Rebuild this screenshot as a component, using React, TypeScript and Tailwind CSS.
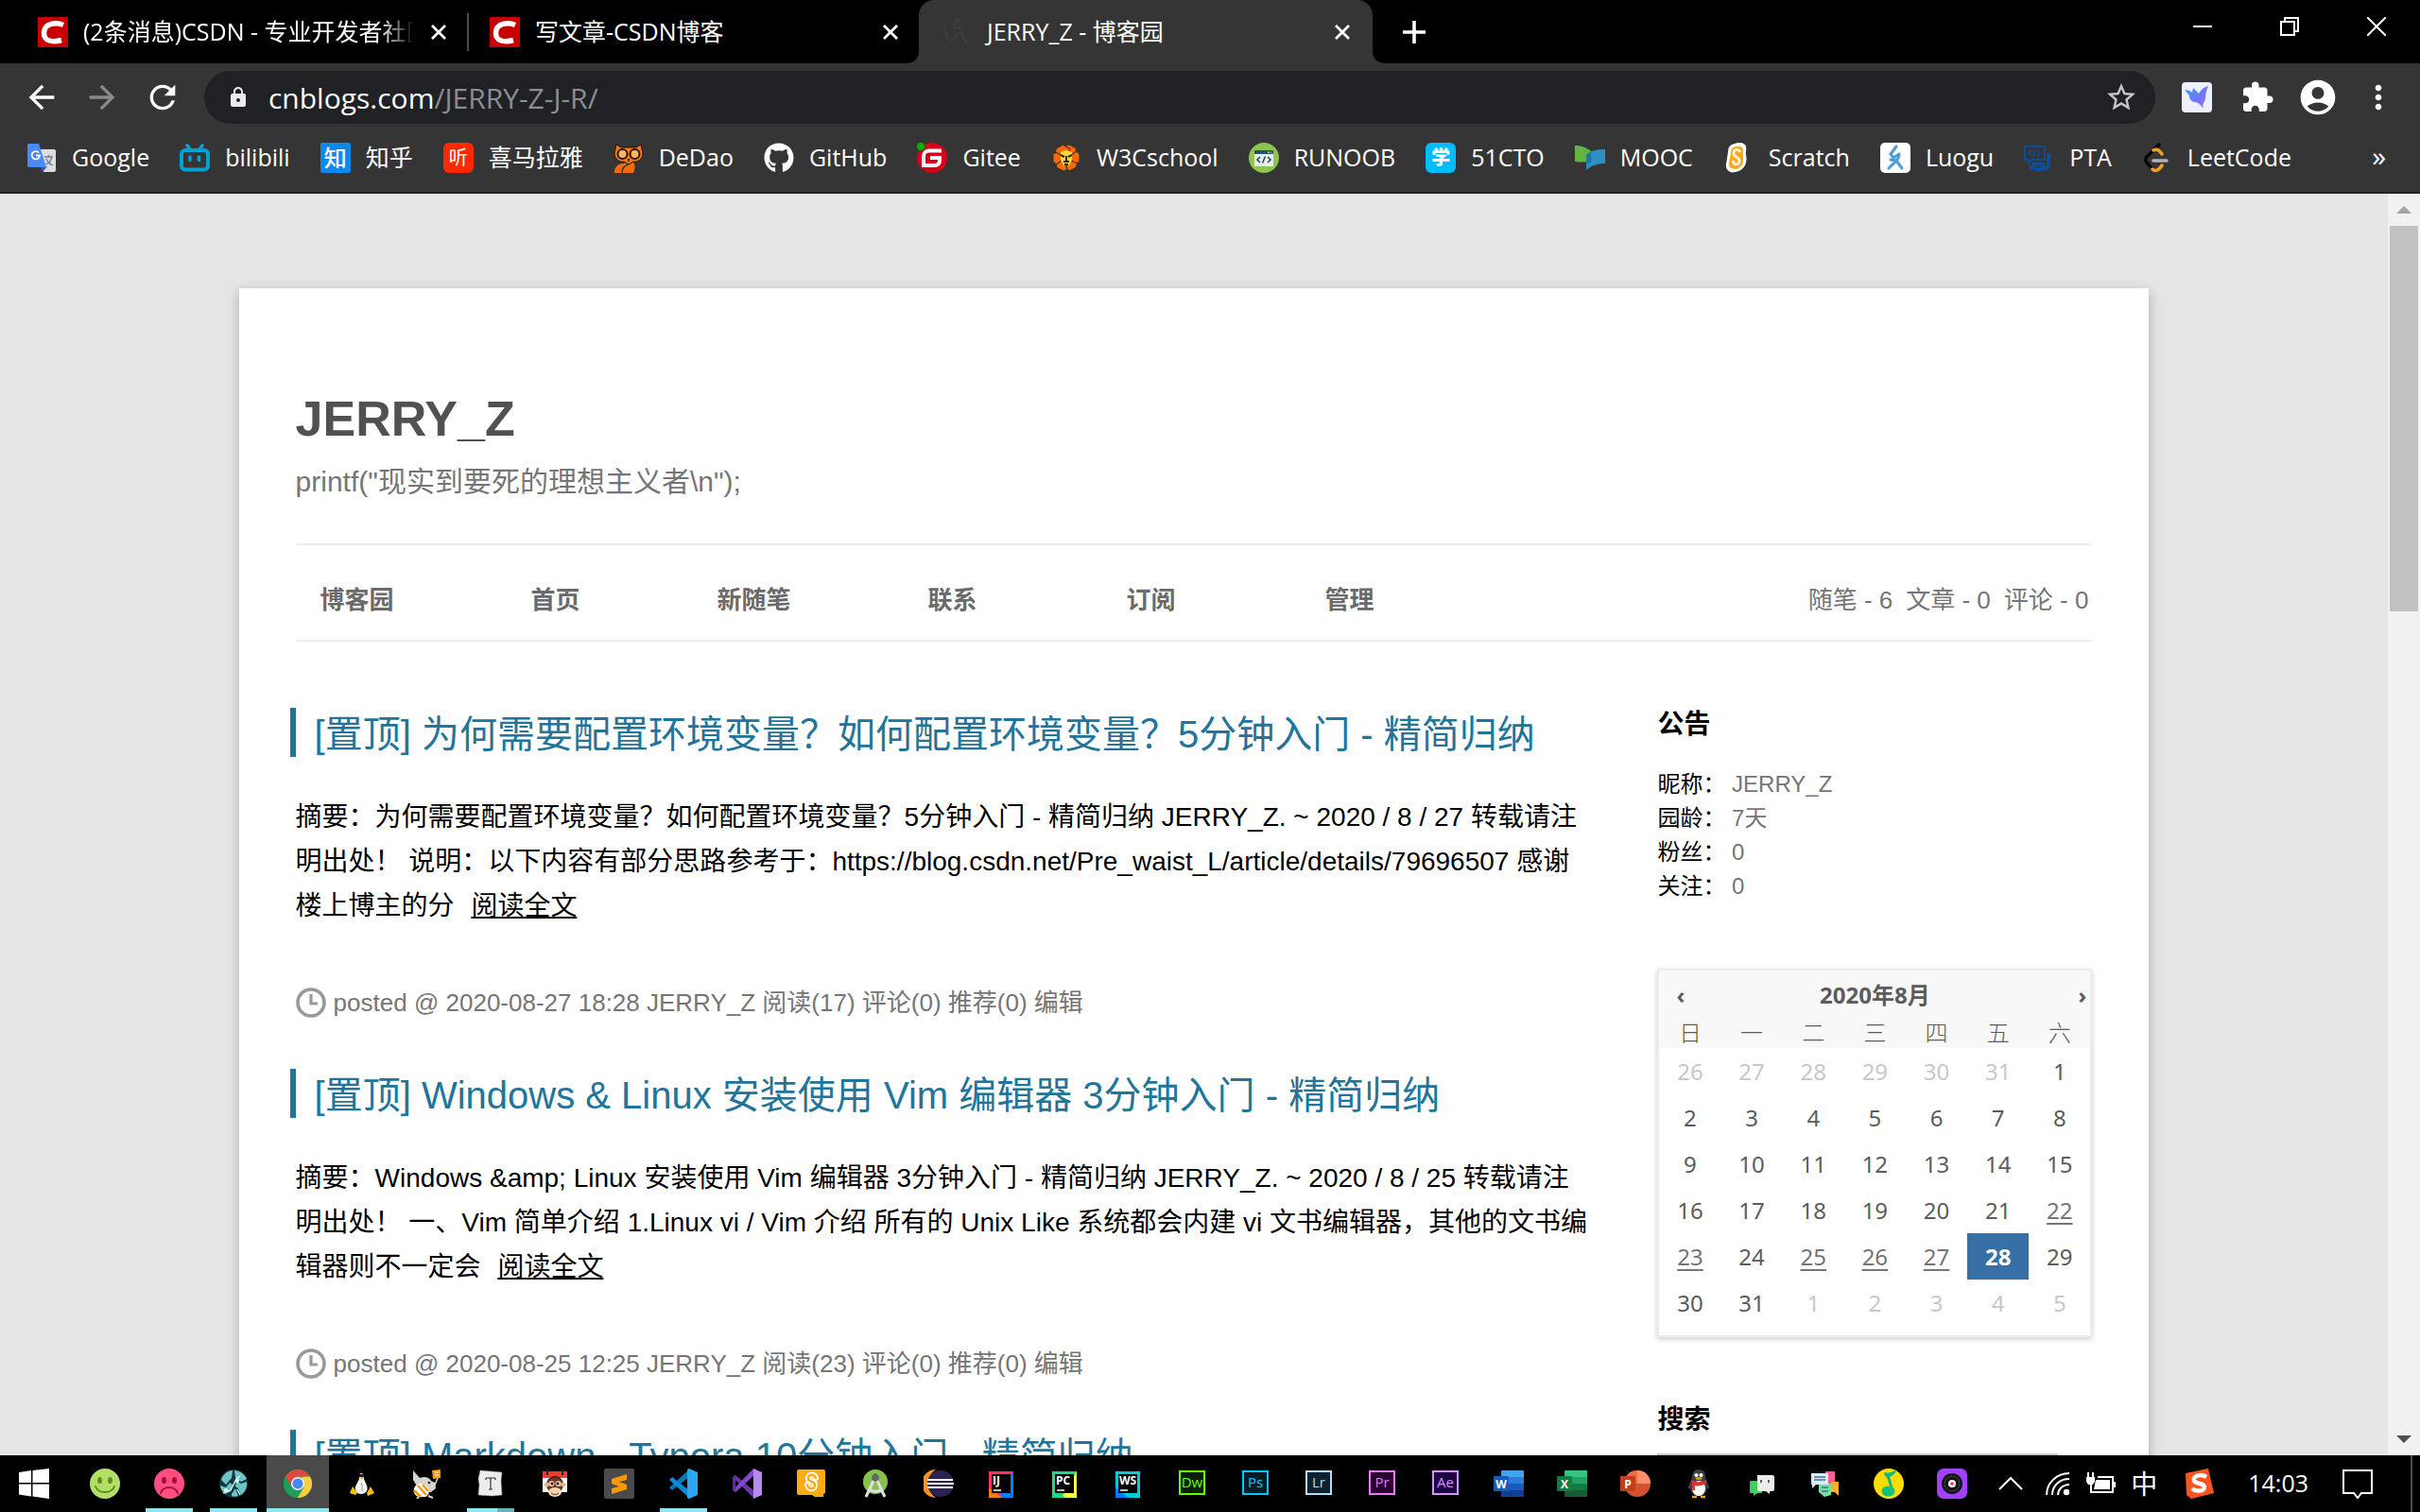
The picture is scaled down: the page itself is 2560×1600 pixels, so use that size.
import React from "react";
import { FaGithub } from "react-icons/fa";
import {
  MdAccountCircle,
  MdArrowBack,
  MdArrowForward,
  MdExtension,
  MdLock,
  MdMoreVert,
  MdRefresh,
  MdStarBorder,
} from "react-icons/md";

const uiFont = "font-['Open_Sans','Noto_Sans_CJK_SC',sans-serif]";
const pageFont = "font-['Liberation_Sans','Noto_Sans_CJK_SC',sans-serif]";

function Icon({ children }: { children: React.ReactNode }) {
  return (
    <svg viewBox="0 0 32 32" className="w-8 h-8 shrink-0" aria-hidden="true">
      {children}
    </svg>
  );
}

/* ---------- Bookmark icons ---------- */

const GoogleTranslateIcon = () => (
  <Icon>
    <path d="M13 7h16a2 2 0 0 1 2 2v20a2 2 0 0 1-2 2H18z" fill="#dcdcdc" />
    <path d="M14 25h8l-5 6z" fill="#3a50c8" />
    <path d="M2 1h11l8 25H3a2 2 0 0 1-2-2V3a2 2 0 0 1 1-2z" fill="#4a8af4" />
    <path d="M13 10.5a4.200 4.200 0 1 0 1 3h-4" fill="none" stroke="#fff" strokeWidth="1.800" />
    <path d="M19 15h9M23.500 13v2M26.500 15c-.5 4-3 7-6 8M21 17c1 3 3 5 6.500 7" fill="none" stroke="#6f8494" strokeWidth="1.500" />
  </Icon>
);

const BilibiliIcon = () => (
  <Icon>
    <path d="M8 3l4 5M24 3l-4 5" stroke="#00a1d6" strokeWidth="3.600" strokeLinecap="round" />
    <rect x="2" y="8" width="28" height="20.500" rx="4" fill="none" stroke="#00a1d6" strokeWidth="4" />
    <path d="M11 15v3.500M20.500 15v3.500" stroke="#00a1d6" strokeWidth="3.600" strokeLinecap="round" />
  </Icon>
);

const ZhihuIcon = () => (
  <span className="w-8 h-8 shrink-0 rounded-xs bg-[#0f88eb] text-white text-2xl leading-8 text-center font-medium">知</span>
);

const XimalayaIcon = () => (
  <span className="w-8 h-8 shrink-0 rounded-md bg-[#ff2a00] text-white text-xl leading-8 text-center">听</span>
);

const OwlIcon = () => (
  <Icon>
    <path d="M1 32c0-7 4-10 10-10 2-1 4-2 6-2 6 0 7 5 4 12z" fill="#ff6b00" />
    <path d="M9 32c0-5 3-8 7-9" stroke="#353535" strokeWidth="1.500" fill="none" />
    <path d="M3 2l5 3h16l5-3 2 9c0 6-5 10-10 9l-5 3-5-3c-5 1-10-3-10-9z" fill="#ff7a0f" stroke="#201000" strokeWidth="1" />
    <circle cx="9.500" cy="12" r="5" fill="#ffb469" stroke="#2a1400" strokeWidth="2" />
    <circle cx="22.500" cy="12" r="5" fill="#ffb469" stroke="#2a1400" strokeWidth="2" />
    <path d="M14.500 17h3L16 21z" fill="#2a1400" />
  </Icon>
);

const GiteeIcon = () => (
  <Icon>
    <circle cx="16" cy="16" r="16" fill="#d8001b" />
    <circle cx="4" cy="4" r="4.500" fill="#00b300" stroke="#353535" strokeWidth=".6" />
    <path d="M26 8.500H13a6 6 0 0 0-6 6V24h12a5 5 0 0 0 5-5v-3H14" fill="none" stroke="#fff" strokeWidth="4" />
  </Icon>
);

const W3CschoolIcon = () => (
  <Icon>
    <g fill="#ff6a00">
      {[30, 90, 150, 210, 270, 330].map((deg) => (
        <path key={deg} d="M9 5l3-3h8l4 8-5 4h-4z" transform={`rotate(${deg} 16 16)`} stroke="#353535" strokeWidth="1.200" />
      ))}
    </g>
    <path d="M10 10l6-2 6 2v8l-3 6h-6l-3-6z" fill="#ffd83d" />
    <path d="M10 13l4 2M22 13l-4 2M16 14v5M13 20h6M14 23h4" stroke="#3a2500" strokeWidth="2" />
  </Icon>
);

const RunoobIcon = () => (
  <Icon>
    <circle cx="16" cy="16" r="16" fill="#8fc44d" />
    <rect x="6" y="8" width="20" height="17" fill="#e9ecec" />
    <rect x="6" y="8" width="20" height="4" fill="#24566b" />
    <path d="M20 9.500h2v1.500h-2z" fill="#f5c84b" />
    <path d="M23 9.500h2v1.500h-2z" fill="#e85a4f" />
    <path d="M12 15l-3 3 3 3M20 15l3 3-3 3M17.500 14.500l-3 7" fill="none" stroke="#2c4a58" strokeWidth="1.600" />
  </Icon>
);

const CtoIcon = () => (
  <span className="w-8 h-8 shrink-0 rounded-md bg-[#00bbff] text-white text-xl leading-8 text-center font-black">学</span>
);

const MoocIcon = () => (
  <Icon>
    <path d="M0 3c7 0 12 2 17 6v12C12 20 6 21 0 20z" fill="#62b445" />
    <path d="M32 7c-8 0-15 1-20 6v16c6-5 12-7 20-7z" fill="#2d8fc5" />
    <path d="M12 13c2-2 3-3 5-3v11l-5 1z" fill="#21779a" />
  </Icon>
);

const ScratchIcon = () => (
  <Icon>
    <path d="M12 1c5-2 12-1 12 4 1 3-1 5 0 8 2 8-2 17-11 18C6 33 2 28 3 22c1-4 1-7 2-12 0-5 2-8 7-9z" fill="#fff" />
    <path d="M13 4c5-1 8 0 8 4v7c1 7-2 12-8 13-5 0-8-3-7-7l2-10c0-4 1-6 5-7z" fill="#ffab19" />
    <path d="M18 10c-2-4-8-3-7 2 0 3 7 3 6 8-1 4-6 4-7-1" fill="none" stroke="#fff" strokeWidth="2.500" />
  </Icon>
);

const LuoguIcon = () => (
  <Icon>
    <rect width="32" height="32" rx="5" fill="#fff" />
    <path d="M17 4l-6 8 3 4 6-4M20 12c0 6-4 8-11 15M11 18l6 1 6 8" fill="none" stroke="#4f9bdc" strokeWidth="3" strokeLinecap="round" />
  </Icon>
);

const PtaIcon = () => (
  <Icon>
    <path d="M1 4h21v14H9l-4 4v-4H1z" fill="none" stroke="#0f4c97" strokeWidth="2" />
    <path d="M8 8l-3 3 3 3M14 8l3 3-3 3M12 7l-2 8" fill="none" stroke="#0f4c97" strokeWidth="1.500" />
    <path d="M24 11h4v14h-4zM8 21h14v4H8zM6 24l10 2 11-2v4l-11 3-10-3z" fill="#0f4c97" />
  </Icon>
);

const LeetCodeIcon = () => (
  <Icon>
    <path d="M18 2L5 15c-2 2-2 4 0 6l6 7" fill="none" stroke="#070707" strokeWidth="3.500" strokeLinecap="round" />
    <path d="M12 8c4-2 6 0 9 4M11 28c3 3 7 1 10-4" fill="none" stroke="#ffa116" strokeWidth="3.500" strokeLinecap="round" />
    <path d="M12 19h14" stroke="#b3b3b3" strokeWidth="3.500" strokeLinecap="round" />
  </Icon>
);

const bookmarks = [
  { label: "Google", icon: <GoogleTranslateIcon /> },
  { label: "bilibili", icon: <BilibiliIcon /> },
  { label: "知乎", icon: <ZhihuIcon /> },
  { label: "喜马拉雅", icon: <XimalayaIcon /> },
  { label: "DeDao", icon: <OwlIcon /> },
  { label: "GitHub", icon: <FaGithub className="w-8 h-8 shrink-0" /> },
  { label: "Gitee", icon: <GiteeIcon /> },
  { label: "W3Cschool", icon: <W3CschoolIcon /> },
  { label: "RUNOOB", icon: <RunoobIcon /> },
  { label: "51CTO", icon: <CtoIcon /> },
  { label: "MOOC", icon: <MoocIcon /> },
  { label: "Scratch", icon: <ScratchIcon /> },
  { label: "Luogu", icon: <LuoguIcon /> },
  { label: "PTA", icon: <PtaIcon /> },
  { label: "LeetCode", icon: <LeetCodeIcon /> },
];

/* ---------- Browser chrome ---------- */

const CsdnIcon = () => (
  <Icon>
    <rect width="32" height="32" fill="#c90000" />
    <path d="M27 8.500C20 5.500 7 6 6.500 16.500 6 26 16 27 25 24.500" fill="none" stroke="#fff" strokeWidth="5.500" />
  </Icon>
);

const CnblogsIcon = () => (
  <Icon>
    <path d="M3 10c1 8 3 13 6 15 4-1 6-3 8-7M13 9c0-8 9-7 7 0-1 4-6 4-7 0M20 15c4 6 6 12 6 13" fill="none" stroke="#403c3c" strokeWidth="2" />
  </Icon>
);

function CloseGlyph() {
  return (
    <svg viewBox="0 0 24 24" className="w-6 h-6" aria-hidden="true">
      <path d="M5 5l14 14M19 5L5 19" stroke="#fff" strokeWidth="2.800" />
    </svg>
  );
}

interface TabProps {
  title: string;
  icon: React.ReactNode;
  active?: boolean;
  faded?: boolean;
}

function Tab({ title, icon, active, faded }: TabProps) {
  return (
    <div
      className={
        active
          ? "relative flex items-center w-[480px] h-full pl-6 pr-5 rounded-t-2xl bg-[#353535]"
          : "relative flex items-center w-[478px] h-full pl-6 pr-[18px]"
      }
    >
      {active && (
        <>
          <svg viewBox="0 0 14 14" className="absolute bottom-0 -left-[14px] w-[14px] h-[14px]" aria-hidden="true">
            <path d="M14 0v14H0C9 14 14 9 14 0z" fill="#353535" />
          </svg>
          <svg viewBox="0 0 14 14" className="absolute bottom-0 -right-[14px] w-[14px] h-[14px]" aria-hidden="true">
            <path d="M0 0v14h14C5 14 0 9 0 0z" fill="#353535" />
          </svg>
        </>
      )}
      {icon}
      <span
        className={
          faded
            ? "ml-4 w-[350px] overflow-hidden whitespace-nowrap [mask-image:linear-gradient(to_right,black_90%,transparent)]"
            : "ml-4 whitespace-nowrap"
        }
      >
        {title}
      </span>
      <button className="ml-auto" aria-label="关闭标签页">
        <CloseGlyph />
      </button>
    </div>
  );
}

function TabStrip() {
  return (
    <div className="flex items-stretch h-[67px] pl-4 bg-black text-white text-[25px]">
      <Tab title="(2条消息)CSDN - 专业开发者社区" icon={<CsdnIcon />} faded />
      <span className="self-center w-[2px] -mr-[2px] h-10 bg-[#4a4a4a]" />
      <Tab title="写文章-CSDN博客" icon={<CsdnIcon />} />
      <Tab title="JERRY_Z - 博客园" icon={<CnblogsIcon />} active />
      <button className="ml-8" aria-label="新标签页">
        <svg viewBox="0 0 24 24" className="w-6 h-6" aria-hidden="true">
          <path d="M12 0v24M0 12h24" stroke="#fff" strokeWidth="3.600" />
        </svg>
      </button>
      <div className="ml-auto flex h-14">
        <button className="w-[92px] flex items-center justify-center" aria-label="最小化">
          <svg viewBox="0 0 20 20" className="w-5 h-5" aria-hidden="true">
            <path d="M0 10h20" stroke="#fff" strokeWidth="2" />
          </svg>
        </button>
        <button className="w-[92px] flex items-center justify-center" aria-label="还原">
          <svg viewBox="0 0 20 20" className="w-5 h-5" aria-hidden="true">
            <path d="M1 5h14v14H1zM5 5V1h14v14h-4" fill="none" stroke="#fff" strokeWidth="2" />
          </svg>
        </button>
        <button className="w-[92px] flex items-center justify-center" aria-label="关闭">
          <svg viewBox="0 0 20 20" className="w-5 h-5" aria-hidden="true">
            <path d="M0 0l20 20M20 0L0 20" stroke="#fff" strokeWidth="2" />
          </svg>
        </button>
      </div>
    </div>
  );
}

function Toolbar() {
  return (
    <div className="flex items-center h-[72px] px-6 bg-[#353535] text-white">
      <button aria-label="后退">
        <MdArrowBack className="w-10 h-10" />
      </button>
      <button className="ml-6 text-[#8a8a8a]" aria-label="前进">
        <MdArrowForward className="w-10 h-10" />
      </button>
      <button className="ml-6" aria-label="重新加载">
        <MdRefresh className="w-10 h-10" />
      </button>
      <div className="ml-6 flex-1 flex items-center h-14 rounded-full bg-[#202124] pl-6 pr-[18px]">
        <MdLock className="w-6 h-6 text-[#e8eaed]" />
        <a href="#" className="ml-5 text-[30px]">
          cnblogs.com<span className="text-[#8b8e92]">/JERRY-Z-J-R/</span>
        </a>
        <button className="ml-auto text-[#c4c6c9]" aria-label="为此标签页添加书签">
          <MdStarBorder className="w-9 h-9" />
        </button>
      </div>
      <button className="ml-7" aria-label="扩展">
        <Icon>
          <defs>
            <linearGradient id="bird" x1="0" y1="0" x2="1" y2="1">
              <stop offset="0" stopColor="#2f9bff" />
              <stop offset="1" stopColor="#a45cff" />
            </linearGradient>
          </defs>
          <rect width="32" height="32" rx="4" fill="#eef0fd" />
          <path d="M3 8c3 0 6 1 8 3l1-5 6 6c3-5 6-7 10-8-2 4-3 9-3 13-1 5-4 6-2 11-3-4-6-7-9-7-4 0-6-3-6-7z" fill="url(#bird)" />
        </Icon>
      </button>
      <button className="ml-[30px]" aria-label="扩展程序">
        <MdExtension className="w-9 h-9" />
      </button>
      <button className="ml-6" aria-label="用户">
        <MdAccountCircle className="w-11 h-11" />
      </button>
      <button className="ml-[22px]" aria-label="更多">
        <MdMoreVert className="w-10 h-10" />
      </button>
    </div>
  );
}

function BookmarksBar() {
  return (
    <nav className="flex items-center h-[66px] pl-7 pr-9 pb-2 bg-[#353535] border-b-2 border-[#232427] text-white text-[25px] whitespace-nowrap">
      <div className="flex items-center gap-8">
        {bookmarks.map((b) => (
          <a key={b.label} href="#" className="flex items-center gap-4">
            {b.icon}
            {b.label}
          </a>
        ))}
      </div>
      <button className="ml-auto text-[30px] leading-8 pb-1" aria-label="更多书签">
        »
      </button>
    </nav>
  );
}

/* ---------- Blog page ---------- */

const navItems = ["博客园", "首页", "新随笔", "联系", "订阅", "管理"];

const posts = [
  {
    title: "[置顶] 为何需要配置环境变量？如何配置环境变量？5分钟入门 - 精简归纳",
    summary:
      "摘要：为何需要配置环境变量？如何配置环境变量？5分钟入门 - 精简归纳 JERRY_Z. ~ 2020 / 8 / 27 转载请注明出处！ 说明：以下内容有部分思路参考于：https://blog.csdn.net/Pre_waist_L/article/details/79696507 感谢楼上博主的分",
    meta: "posted @ 2020-08-27 18:28 JERRY_Z 阅读(17) 评论(0) 推荐(0) 编辑",
  },
  {
    title: "[置顶] Windows & Linux 安装使用 Vim 编辑器 3分钟入门 - 精简归纳",
    summary:
      "摘要：Windows &amp; Linux 安装使用 Vim 编辑器 3分钟入门 - 精简归纳 JERRY_Z. ~ 2020 / 8 / 25 转载请注明出处！ 一、Vim 简单介绍 1.Linux vi / Vim 介绍 所有的 Unix Like 系统都会内建 vi 文书编辑器，其他的文书编辑器则不一定会",
    meta: "posted @ 2020-08-25 12:25 JERRY_Z 阅读(23) 评论(0) 推荐(0) 编辑",
  },
  {
    title: "[置顶] Markdown - Typora 10分钟入门 - 精简归纳",
    summary: "",
    meta: "",
  },
];

const profile = [
  ["昵称：", "JERRY_Z"],
  ["园龄：", "7天"],
  ["粉丝：", "0"],
  ["关注：", "0"],
];

const weekdays = ["日", "一", "二", "三", "四", "五", "六"];

const weeks = [
  [26, 27, 28, 29, 30, 31, 1],
  [2, 3, 4, 5, 6, 7, 8],
  [9, 10, 11, 12, 13, 14, 15],
  [16, 17, 18, 19, 20, 21, 22],
  [23, 24, 25, 26, 27, 28, 29],
  [30, 31, 1, 2, 3, 4, 5],
];

const postedDays = [22, 23, 25, 26, 27];

function Post({ title, summary, meta }: { title: string; summary: string; meta: string }) {
  return (
    <article className="mb-[54px]">
      <h2 className="-ml-[6px] h-[52px] pl-5 border-l-[6px] border-[#21759b] text-[40px] leading-[56px] text-[#21759b] whitespace-nowrap">
        <a href="#">{title}</a>
      </h2>
      {summary && (
        <>
          <p className="mt-10 text-[28px] leading-[47px] text-black">
            {summary}{" "}
            <a href="#" className="ml-[10px] underline">
              阅读全文
            </a>
          </p>
          <div className="mt-[63px] flex items-center h-8 gap-2 text-[26px] text-[#757575]">
            <svg viewBox="0 0 32 32" className="w-8 h-8" aria-hidden="true">
              <circle cx="16" cy="16" r="14" fill="#fff" stroke="#999" strokeWidth="3.600" />
              <path d="M16 7v10h7" fill="none" stroke="#999" strokeWidth="3.200" />
            </svg>
            {meta}
          </div>
        </>
      )}
    </article>
  );
}

function Day({ day, row }: { day: number; row: number }) {
  const outside = (row === 0 && day > 20) || (row === 5 && day < 10);
  if (outside) return <td className="text-[#c8c8c8]">{day}</td>;
  if (day === 28) return <td className="bg-[#3670a7] text-white font-bold">{day}</td>;
  if (postedDays.includes(day)) {
    return (
      <td>
        <a href="#" className="underline text-[#757575] underline-offset-4">
          {day}
        </a>
      </td>
    );
  }
  return <td>{day}</td>;
}

function Calendar() {
  return (
    <div className="mt-[69px] border-2 border-[#ececec] pb-[10px] shadow-[0_2px_6px_rgba(0,0,0,0.2)] text-2xl text-[#5c5c5c] font-['Noto_Sans','Noto_Sans_CJK_SC',sans-serif]">
      <div className="flex items-center justify-between h-[52px] bg-[#f8f8f8] font-bold">
        <button className="w-10 pl-[18px] text-left" aria-label="上个月">‹</button>
        <span>2020年8月</span>
        <button className="w-10 pr-1 text-right" aria-label="下个月">›</button>
      </div>
      <table className="w-full table-fixed border-collapse text-center">
        <thead className="bg-[#f8f8f8]">
          <tr className="h-[30px] leading-7">
            {weekdays.map((d) => (
              <th key={d} className="p-0 pb-[2px] font-light">
                {d}
              </th>
            ))}
          </tr>
        </thead>
        <tbody>
          {weeks.map((week, row) => (
            <tr key={row} className="h-[49px]">
              {week.map((day, i) => (
                <Day key={i} day={day} row={row} />
              ))}
            </tr>
          ))}
        </tbody>
      </table>
    </div>
  );
}

function BlogPage() {
  return (
    <div className={`flex-1 min-h-0 flex overflow-hidden bg-[#e5e5e5] ${pageFont}`}>
      <div className="flex-1 min-w-0 pt-[100px]">
        <div className="w-4/5 mx-auto min-h-full px-[60px] pt-[108px] bg-white shadow-[0_4px_12px_rgba(0,0,0,0.25)]">
          <header>
            <h1 className="text-[52px] leading-[60px] font-bold text-[#515151]">JERRY_Z</h1>
            <p className="mt-[19px] text-[30px] leading-9 text-[#757575]">printf("现实到要死的理想主义者\n");</p>
          </header>
          <div className="mt-[47px] flex items-center justify-between h-[104px] pt-4 border-y-2 border-[#ededed] text-[26px] text-[#757575]">
            <nav className="flex gap-20">
              {navItems.map((item) => (
                <a key={item} href="#" className="w-[130px] text-center font-bold text-[#6a6a6a]">
                  {item}
                </a>
              ))}
            </nav>
            <div className="pr-1 flex gap-[14px]">
              <span>随笔 - 6</span>
              <span>文章 - 0</span>
              <span>评论 - 0</span>
            </div>
          </div>
          <div className="flex gap-[68px] pt-[70px]">
            <main className="flex-1 min-w-0">
              {posts.map((p) => (
                <Post key={p.title} {...p} />
              ))}
            </main>
            <aside className="w-[460px] text-black">
              <h3 className="text-[28px] leading-9 font-bold">公告</h3>
              <div className="mt-[27px] text-2xl leading-9">
                {profile.map(([label, value]) => (
                  <div key={label}>
                    {label} <a href="#" className="text-[#757575]">{value}</a>
                  </div>
                ))}
              </div>
              <Calendar />
              <h3 className="mt-[70px] text-[28px] leading-9 font-bold">
                <label htmlFor="search">搜索</label>
              </h3>
              <input id="search" type="text" className="mt-[17px] w-[424px] h-12 border-2 border-[#ccc]" />
            </aside>
          </div>
        </div>
      </div>
      {/* scrollbar */}
      <div className="w-[34px] flex flex-col items-center bg-[#f1f1f1]">
        <div className="h-[34px] flex items-center">
          <svg viewBox="0 0 16 8" className="w-4 h-2" aria-hidden="true">
            <path d="M0 8l8-8 8 8z" fill="#a3a3a3" />
          </svg>
        </div>
        <div className="w-[30px] h-[408px] bg-[#c1c1c1]" />
        <div className="mt-auto h-[34px] flex items-center">
          <svg viewBox="0 0 16 8" className="w-4 h-2" aria-hidden="true">
            <path d="M0 0l8 8 8-8z" fill="#505050" />
          </svg>
        </div>
      </div>
    </div>
  );
}

/* ---------- Taskbar ---------- */

const SmileIcon = ({ face, ink, mouth }: { face: string; ink: string; mouth: string }) => (
  <Icon>
    <circle cx="16" cy="16" r="16" fill={face} />
    <ellipse cx="10.500" cy="12.500" rx="2.500" ry="3.500" fill={ink} />
    <ellipse cx="21.500" cy="12.500" rx="2.500" ry="3.500" fill={ink} />
    <path d={mouth} fill="none" stroke={ink} strokeWidth="2" strokeLinecap="round" />
  </Icon>
);

const GlobeIcon = () => (
  <Icon>
    <circle cx="16" cy="16" r="15" fill="#12383d" />
    <path d="M3 12c2-6 7-10 12-10l-1 8-6 7zM17 2c6 0 11 4 13 9l-6 3-6-4zM2 18l6 2 4-5 3 2-2 7-6 3c-3-3-5-6-5-9zM19 13l5 3 6-2c1 6-2 11-6 14l-3-7-3-2zM14 27l4-6 3 8c-3 1-5 1-7 0z" fill="#6cc4c6" />
    <path d="M5 26l8-3 6-12 4-3M20 22l3 6" fill="none" stroke="#e8ffff" strokeWidth="1.300" />
    <circle cx="20" cy="13" r="2" fill="#dff" />
    <circle cx="8" cy="23" r="2" fill="#dff" />
  </Icon>
);

const ChromeIcon = () => (
  <Icon>
    <circle cx="16" cy="16" r="15" fill="#34a853" />
    <path d="M16 1a15 15 0 0 1 13 7.500H16L9.500 19.700 3 8.500A15 15 0 0 1 16 1z" fill="#dd4b3e" />
    <path d="M29 8.500A15 15 0 0 1 15.500 31L22.500 19.700 20 9z" fill="#ffcd40" />
    <path d="M3 8.500A15 15 0 0 0 15.500 31l7-11.300-13 0z" fill="#1e9c5a" />
    <circle cx="16" cy="16" r="7" fill="#f1f1f1" />
    <circle cx="16" cy="16" r="5.500" fill="#4688f1" />
  </Icon>
);

const TuxIcon = () => (
  <Icon>
    <path d="M15 5c3 0 3 3 3 6l3 7c2 5-1 9-6 9s-7-4-6-8l4-8c0-3 0-6 2-6z" fill="#f4f4f4" />
    <path d="M13 6h5v3h-5z" fill="#222" />
    <path d="M13 9h5l-2 3z" fill="#fb0" />
    <path d="M15 15l1 3v6" stroke="#999" fill="none" />
    <path d="M3 26l3-7 5 7-2 2zM29 26l-4-7-4 7 1 3z" fill="#ffc107" />
  </Icon>
);

const BeeMouseIcon = () => (
  <Icon>
    <path d="M22 2l9-1v9l-8 1z" fill="#f59a12" />
    <path d="M25 4h4M25 7h4" stroke="#fff" />
    <path d="M28 10l-4 10" stroke="#ddd" strokeWidth="1.500" />
    <path d="M2 2l7 8c5-2 10-1 12 3l4 2 1 6-5 4-8-1-6-4-5-8z" fill="#d9d4cb" />
    <path d="M3 21c2-6 12-7 15 0 2 4 0 8-3 9H8c-4-1-6-5-5-9z" fill="#fff" />
    <path d="M7 18l9 10M12 17l6 7M3 23l7 7" stroke="#f59a12" strokeWidth="2.600" />
    <circle cx="19" cy="15" r="1.300" fill="#222" />
    <path d="M8 30l-2 2M18 29l5 2" stroke="#d9d4cb" strokeWidth="2" />
  </Icon>
);

const TyporaIcon = () => (
  <Icon>
    <path d="M5 2l23 2-1 9 1 15-10 1-15-1 1-11-1-6z" fill="#ececec" stroke="#9b9b9b" strokeWidth=".5" />
    <path d="M11 10h10M11 10v2M21 10v2M16 10v12M14 22h4" fill="none" stroke="#333" strokeWidth="1.200" />
  </Icon>
);

const MonkeyIcon = () => (
  <Icon>
    <rect x="3" y="8" width="26" height="17" fill="#fff" />
    <rect x="3" y="3" width="26" height="7" fill="#f23b2f" />
    <path d="M8 1v6M24 1v6" stroke="#222" strokeWidth="2" />
    <circle cx="16" cy="17" r="8.500" fill="#6b3a1f" stroke="#1d0e06" />
    <circle cx="7.500" cy="17" r="2.500" fill="#e9b183" />
    <circle cx="24.500" cy="17" r="2.500" fill="#e9b183" />
    <circle cx="12.500" cy="16" r="3" fill="#f2c79c" />
    <circle cx="19.500" cy="16" r="3" fill="#f2c79c" />
    <circle cx="13" cy="16" r="1.400" fill="#0a1a5a" />
    <circle cx="19" cy="16" r="1.400" fill="#0a1a5a" />
    <ellipse cx="16" cy="25" rx="7" ry="5" fill="#f7d3ae" />
    <path d="M12 26c2 2 6 2 8 0" stroke="#59301a" fill="none" />
  </Icon>
);

const SublimeIcon = () => (
  <Icon>
    <rect width="32" height="32" rx="2" fill="#4a4a4a" />
    <path d="M24 6v6l-8 2 8 3v5L8 27v-6l8-2-8-3v-5z" fill="#ff9800" />
  </Icon>
);

const VsCodeIcon = () => (
  <Icon>
    <path d="M22 1v8L4 23l-3-3z" fill="#0077b9" />
    <path d="M1 12l3-3 18 14v8z" fill="#1089d4" />
    <path d="M22 0l9 4v24l-9 4-2-1V1z" fill="#2aa8f2" />
  </Icon>
);

const VisualStudioIcon = () => (
  <Icon>
    <path d="M0 9l3-2 20 17v8z" fill="#6b35b0" />
    <path d="M22 0v8L3 25l-3-2z" fill="#8248d0" />
    <path d="M0 9l3-2v18l-3-2z" fill="#5d2f9c" />
    <path d="M22 0l9 4v24l-9 4z" fill="#b78af2" />
  </Icon>
);

const ScratchAppIcon = () => (
  <Icon>
    <path d="M2 1h26a2 2 0 0 1 2 2v22a2 2 0 0 1-2 2v3h-9l-3-2H2a2 2 0 0 1-2-2V3a2 2 0 0 1 2-2z" fill="#ffab19" />
    <path d="M20 10c-2-5-9-4-8 1 1 4 8 2 7 7-1 5-7 4-8-1" fill="none" stroke="#fff" strokeWidth="6" strokeLinecap="round" />
    <path d="M20 10c-2-5-9-4-8 1 1 4 8 2 7 7-1 5-7 4-8-1" fill="none" stroke="#ffab19" strokeWidth="2.500" strokeLinecap="round" />
  </Icon>
);

const AndroidStudioIcon = () => (
  <Icon>
    <circle cx="16" cy="14" r="13" fill="#85c44a" />
    <circle cx="16" cy="10" r="4" fill="#666" />
    <path d="M16 5v4" stroke="#666" strokeWidth="3" />
    <path d="M14 13L6 30M18 13l8 17M9 22c4 3 10 3 14 0" fill="none" stroke="#e0e0e0" strokeWidth="3" />
  </Icon>
);

const EclipseIcon = () => (
  <Icon>
    <path d="M13 1A15 15 0 0 0 13 31 18 18 0 0 1 13 1z" fill="#f7941e" />
    <circle cx="18" cy="16" r="14" fill="#2c2255" />
    <path d="M4 12h27M4 16h28M4 20h27" stroke="#fff" strokeWidth="2.200" />
  </Icon>
);

function JetBrainsIcon({ text, colors }: { text: string; colors: [string, string, string] }) {
  return (
    <Icon>
      <path d="M2 3h26v28H2z" fill={colors[0]} />
      <path d="M28 3v28H12z" fill={colors[1]} />
      <path d="M2 20l14 11H2z" fill={colors[2]} />
      <rect x="5" y="6" width="20" height="20" fill="#000" />
      <text x="6" y="17" fontSize="12" fontWeight="700" fill="#fff">{text}</text>
      <path d="M7 23h8" stroke="#fff" strokeWidth="1.500" />
    </Icon>
  );
}

function AdobeIcon({ text, fg, bg }: { text: string; fg: string; bg: string }) {
  return (
    <Icon>
      <rect x="3" y="3" width="26" height="24" fill={bg} stroke={fg} strokeWidth="2" />
      <text x="16" y="20" fontSize="15" textAnchor="middle" fill={fg}>{text}</text>
    </Icon>
  );
}

function OfficeIcon({ text, shades }: { text: string; shades: [string, string, string, string, string] }) {
  return (
    <Icon>
      <rect x="8" y="2" width="24" height="28" rx="1" fill={shades[0]} />
      <path d="M8 9h24v7H8z" fill={shades[1]} />
      <path d="M8 16h24v7H8z" fill={shades[2]} />
      <path d="M8 23h24v7H8z" fill={shades[3]} />
      <rect x="0" y="8" width="16" height="16" rx="1" fill={shades[4]} />
      <text x="8" y="20.500" fontSize="12" fontWeight="700" textAnchor="middle" fill="#fff">{text}</text>
    </Icon>
  );
}

const PowerPointIcon = () => (
  <Icon>
    <circle cx="18" cy="16" r="14" fill="#d35230" />
    <path d="M18 2a14 14 0 0 1 14 14H18z" fill="#ff8f6b" />
    <path d="M18 2A14 14 0 0 0 4 16h14z" fill="#ed6c47" />
    <rect x="0" y="8" width="16" height="16" rx="1" fill="#c43e1c" />
    <text x="8" y="20.500" fontSize="12" fontWeight="700" textAnchor="middle" fill="#fff">P</text>
  </Icon>
);

const QQIcon = () => (
  <Icon>
    <path d="M16 1c5 0 7 4 7 8l3 8c2 4 1 5-1 4-1 5-4 8-9 8s-8-3-9-8c-2 1-3 0-1-4l3-8c0-4 2-8 7-8z" fill="#3b3f4c" />
    <ellipse cx="16" cy="21" rx="7" ry="8" fill="#fff" />
    <circle cx="13.500" cy="7" r="2" fill="#fff" />
    <circle cx="18.500" cy="7" r="2" fill="#fff" />
    <ellipse cx="16" cy="10.500" rx="3.500" ry="1.300" fill="#f6a500" />
    <path d="M8 12c5 3 11 3 16 0v4c-5 2-9 3-12 2v5H9v-6z" fill="#d9352a" />
    <path d="M9 30h5M18 30h5" stroke="#f6a500" strokeWidth="2.500" />
  </Icon>
);

const WeChatIcon = () => (
  <Icon>
    <path d="M4 13h12v13h-5l-4 3v-3H4a1 1 0 0 1-1-1V14z" fill="#3ccf5c" />
    <path d="M11 7h16a2 2 0 0 1 2 2v13a2 2 0 0 1-2 2h-3v3l-4-3h-9z" fill="#ececec" />
    <path d="M15 12v3M23 12v3" stroke="#555" strokeWidth="1.800" />
  </Icon>
);

const ChatBubblesIcon = () => (
  <Icon>
    <path d="M16 3h10v17l-10-4z" fill="#ff5c93" />
    <path d="M22 14h8v15l-4-4h-4z" fill="#ffb02e" />
    <path d="M9 16h13v12l-7 2-6-5z" fill="#73e0a0" />
    <path d="M1 5h18v12H6l-4 4V17H1z" fill="#dbeaf7" />
    <path d="M4 9h12M4 12h12M12 20h7M12 24h7" stroke="#4b6d8f" strokeWidth="1.500" />
  </Icon>
);

const QQMusicIcon = () => (
  <Icon>
    <circle cx="16" cy="16" r="16" fill="#ffdc00" />
    <path d="M12 5l4 5 4 14" fill="none" stroke="#12b886" strokeWidth="3" />
    <ellipse cx="15.500" cy="24" rx="7" ry="5.500" fill="#12c27f" />
    <path d="M11 4c5 1 9 0 13-3-1 5-4 7-8 8z" fill="#12b886" />
  </Icon>
);

const VinylIcon = () => (
  <Icon>
    <rect width="32" height="32" rx="7" fill="#a142ff" />
    <circle cx="16" cy="16" r="11" fill="#141414" />
    <circle cx="16" cy="16" r="8" fill="none" stroke="#444" />
    <circle cx="16" cy="16" r="4" fill="#fff" />
    <circle cx="16" cy="16" r="1.800" fill="#e0334a" />
  </Icon>
);

const SogouIcon = () => (
  <Icon>
    <path d="M2 5l24-5 6 26-24 6-5-4z" fill="#f9541e" />
    <path d="M24 9c-6-4-15-1-13 4 2 4 12 2 11 7-1 4-9 5-13 1" fill="none" stroke="#fff" strokeWidth="4.500" />
  </Icon>
);

const firstApps = [
  { name: "smile", icon: <SmileIcon face="#b2e066" ink="#5f8f1e" mouth="M6 19c3 8 17 8 20 0" /> },
  { name: "frown", running: true, icon: <SmileIcon face="#ff4f81" ink="#a30f42" mouth="M7 26c3-8 15-8 18 0" /> },
  { name: "globe", running: true, icon: <GlobeIcon /> },
  { name: "chrome", active: true, icon: <ChromeIcon /> },
  { name: "tux", icon: <TuxIcon /> },
  { name: "mouse", icon: <BeeMouseIcon /> },
  { name: "typora", running: true, icon: <TyporaIcon /> },
  { name: "monkey", icon: <MonkeyIcon /> },
  { name: "sublime", icon: <SublimeIcon /> },
  { name: "vscode", running: true, icon: <VsCodeIcon /> },
  { name: "visual studio", icon: <VisualStudioIcon /> },
];

const secondApps = [
  { name: "scratch", icon: <ScratchAppIcon /> },
  { name: "android studio", icon: <AndroidStudioIcon /> },
  { name: "eclipse", icon: <EclipseIcon /> },
  { name: "intellij", icon: <JetBrainsIcon text="IJ" colors={["#fe315d", "#087cfa", "#f97a12"]} /> },
  { name: "pycharm", icon: <JetBrainsIcon text="PC" colors={["#21d789", "#fcf84a", "#21d789"]} /> },
  { name: "webstorm", icon: <JetBrainsIcon text="WS" colors={["#00cdd7", "#00cdd7", "#087cfa"]} /> },
  { name: "dreamweaver", icon: <AdobeIcon text="Dw" fg="#62ff00" bg="#0a1e00" /> },
  { name: "photoshop", icon: <AdobeIcon text="Ps" fg="#00c8ff" bg="#001d28" /> },
  { name: "lightroom", icon: <AdobeIcon text="Lr" fg="#b4dcf2" bg="#0c2230" /> },
  { name: "premiere", icon: <AdobeIcon text="Pr" fg="#e878ff" bg="#2a0030" /> },
  { name: "after effects", icon: <AdobeIcon text="Ae" fg="#cf96fd" bg="#1f0040" /> },
  { name: "word", icon: <OfficeIcon text="W" shades={["#41a5ee", "#2b7cd3", "#185abd", "#103f91", "#185abd"]} /> },
  { name: "excel", icon: <OfficeIcon text="X" shades={["#33c481", "#21a366", "#107c41", "#185c37", "#107c41"]} /> },
  { name: "powerpoint", icon: <PowerPointIcon /> },
  { name: "qq", icon: <QQIcon /> },
  { name: "wechat", icon: <WeChatIcon /> },
  { name: "chat", icon: <ChatBubblesIcon /> },
  { name: "qq music", icon: <QQMusicIcon /> },
  { name: "player", icon: <VinylIcon /> },
];

function Taskbar() {
  return (
    <footer className="flex items-center h-[60px] shrink-0 bg-black text-white">
      <button className="w-[77px] pl-5" aria-label="开始">
        <Icon>
          <path d="M0 4l13-2v13H0zM14.500 2L32 0v15H14.500zM0 16.500h13v13L0 27.500zM14.500 16.500H32V32l-17.500-2.500z" fill="#fff" />
        </Icon>
      </button>
      {firstApps.map((app) => (
        <button
          key={app.name}
          aria-label={app.name}
          className={
            app.active
              ? "relative w-[68px] h-full flex items-center justify-center bg-[#4a4a4a] border-x border-black"
              : "relative w-[68px] h-full flex items-center justify-center"
          }
        >
          {app.icon}
          {app.running && <span className="absolute bottom-0 inset-x-[9px] h-1 bg-[#8ee5ee]" />}
          {app.active && <span className="absolute bottom-0 inset-x-0 h-1 bg-[#8ee5ee]" />}
          {app.name === "typora" && <span className="absolute bottom-0 right-[9px] w-[18px] h-1 bg-[#6bb3bb]" />}
        </button>
      ))}
      {secondApps.map((app) => (
        <button key={app.name} aria-label={app.name} className="w-[67px] h-full flex items-center justify-center">
          {app.icon}
        </button>
      ))}
      <div className="ml-auto flex items-center h-full">
        <button className="mr-6" aria-label="显示隐藏的图标">
          <svg viewBox="0 0 26 26" className="w-[26px] h-[26px]" aria-hidden="true">
            <path d="M1 19L13 7l12 12" fill="none" stroke="#fff" strokeWidth="2" />
          </svg>
        </button>
        <svg viewBox="0 0 26 26" className="w-[26px] h-[26px] mr-4" aria-hidden="true">
          <path d="M1 25C1 12 12 2 25 2M7 25C7 15 15 8 25 8M13 25c0-6 5-11 12-11" fill="none" stroke="#fff" strokeWidth="2" />
          <circle cx="22" cy="22" r="3.200" fill="#fff" />
        </svg>
        <svg viewBox="0 0 32 26" className="w-8 h-[26px] mr-4" aria-hidden="true">
          <path d="M13 6h16v16H6" fill="none" stroke="#fff" strokeWidth="2" />
          <path d="M11 9h15v10H9z" fill="#fff" />
          <path d="M30 11h2v6h-2zM1 6h9v5l-2 3H3l-2-3zM2 1h2v5H2zM7 1h2v5H7zM5 14h2v9H5z" fill="#fff" />
        </svg>
        <span className="text-[28px] leading-8 w-7 mr-7 text-center">中</span>
        <SogouIcon />
        <span className="ml-9 text-[25px]">14:03</span>
        <button className="ml-9" aria-label="通知">
          <svg viewBox="0 0 32 32" className="w-8 h-8" aria-hidden="true">
            <path d="M1 2h30v24H20l-4 5-4-5H1z" fill="none" stroke="#fff" strokeWidth="2" />
          </svg>
        </button>
        <span className="ml-10 mr-2 w-[2px] h-full bg-[#4d4d4d]" />
      </div>
    </footer>
  );
}

export default function App() {
  return (
    <div className={`flex flex-col h-screen overflow-hidden ${uiFont}`}>
      <TabStrip />
      <Toolbar />
      <BookmarksBar />
      <BlogPage />
      <Taskbar />
    </div>
  );
}
